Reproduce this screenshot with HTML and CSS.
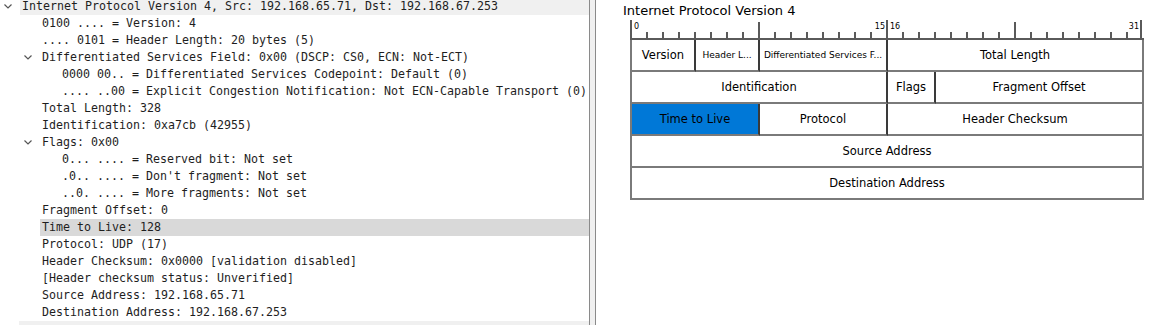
FILE: index.html
```html
<!DOCTYPE html>
<html>
<head>
<meta charset="utf-8">
<link rel="stylesheet" href="styles.css">
</head>
<body>
<div class="app">
  <div class="tree-pane">
    <div class="tree">
      <div class="row lvl0 hover"><svg class="chev" viewBox="0 0 8 5"><polyline points="0.5,0.5 4,4 7.5,0.5"/></svg><span class="txt">Internet Protocol Version 4, Src: 192.168.65.71, Dst: 192.168.67.253</span></div>
      <div class="row lvl1"><span class="txt">0100 .... = Version: 4</span></div>
      <div class="row lvl1"><span class="txt">.... 0101 = Header Length: 20 bytes (5)</span></div>
      <div class="row lvl1"><svg class="chev" viewBox="0 0 8 5"><polyline points="0.5,0.5 4,4 7.5,0.5"/></svg><span class="txt">Differentiated Services Field: 0x00 (DSCP: CS0, ECN: Not-ECT)</span></div>
      <div class="row lvl2"><span class="txt">0000 00.. = Differentiated Services Codepoint: Default (0)</span></div>
      <div class="row lvl2"><span class="txt">.... ..00 = Explicit Congestion Notification: Not ECN-Capable Transport (0)</span></div>
      <div class="row lvl1"><span class="txt">Total Length: 328</span></div>
      <div class="row lvl1"><span class="txt">Identification: 0xa7cb (42955)</span></div>
      <div class="row lvl1"><svg class="chev" viewBox="0 0 8 5"><polyline points="0.5,0.5 4,4 7.5,0.5"/></svg><span class="txt">Flags: 0x00</span></div>
      <div class="row lvl2"><span class="txt">0... .... = Reserved bit: Not set</span></div>
      <div class="row lvl2"><span class="txt">.0.. .... = Don't fragment: Not set</span></div>
      <div class="row lvl2"><span class="txt">..0. .... = More fragments: Not set</span></div>
      <div class="row lvl1"><span class="txt">Fragment Offset: 0</span></div>
      <div class="row lvl1 selected"><span class="txt">Time to Live: 128</span></div>
      <div class="row lvl1"><span class="txt">Protocol: UDP (17)</span></div>
      <div class="row lvl1"><span class="txt">Header Checksum: 0x0000 [validation disabled]</span></div>
      <div class="row lvl1"><span class="txt">[Header checksum status: Unverified]</span></div>
      <div class="row lvl1"><span class="txt">Source Address: 192.168.65.71</span></div>
      <div class="row lvl1"><span class="txt">Destination Address: 192.168.67.253</span></div>
    </div>
    <div class="hscroll"></div>
  </div>
  <div class="splitter"></div>
  <div class="diagram-pane">
    <div class="title">Internet Protocol Version 4</div>
    <div class="diagram">
      <div class="ruler">
        <div class="half"><span class="lbl">0</span><span class="lbl">15</span></div>
        <div class="half last"><span class="lbl">16</span><span class="lbl">31</span></div>
      </div>
      <div class="fields">
        <div class="cell b4">Version</div>
        <div class="cell b4 small">Header L...</div>
        <div class="cell b8 small">Differentiated Services F...</div>
        <div class="cell b16 end">Total Length</div>
        <div class="cell b16">Identification</div>
        <div class="cell b3">Flags</div>
        <div class="cell b13 end">Fragment Offset</div>
        <div class="cell b8 active">Time to Live</div>
        <div class="cell b8">Protocol</div>
        <div class="cell b16 end">Header Checksum</div>
        <div class="cell b32 end">Source Address</div>
        <div class="cell b32 end">Destination Address</div>
      </div>
    </div>
  </div>
</div>
</body>
</html>
```

FILE: styles.css
```css
html, body {
  margin: 0;
  padding: 0;
  background: #ffffff;
}

.app {
  display: flex;
  width: 1157px;
  height: 325px;
  overflow: hidden;
}

.tree-pane {
  width: 589px;
  flex: none;
  display: flex;
  flex-direction: column;
  overflow: hidden;
  background: #ffffff;
}

.tree {
  margin-top: -2px;
  flex: 1;
  font-family: "DejaVu Sans Mono", "Liberation Mono", monospace;
  font-size: 11.63px;
  color: #1e1e1e;
}

.row {
  height: 17px;
  display: flex;
  align-items: center;
  position: relative;
  white-space: nowrap;
}

.row .txt {
  display: block;
  height: 17px;
  line-height: 17px;
  padding-left: 2px;
  flex: 1;
}

.lvl0 { padding-left: 20px; }
.lvl1 { padding-left: 40px; }
.lvl2 { padding-left: 60px; }

.row.hover .txt { background: #f0f0f0; }
.row.selected .txt { background: #d9d9d9; }

.chev {
  width: 8px;
  height: 5px;
  margin-left: -16px;
  margin-right: 8px;
  fill: none;
  stroke: #555555;
  stroke-width: 1.2;
}

.hscroll {
  height: 4px;
  margin-left: 19px;
  background: #f0f0f0;
  flex: none;
}

.splitter {
  width: 5px;
  flex: none;
  background: #f0f0f0;
  border-left: 1px solid #8a8a8a;
  border-right: 1px solid #8a8a8a;
}

.diagram-pane {
  flex: 1;
  padding-left: 27px;
  font-family: "DejaVu Sans", "Liberation Sans", sans-serif;
  color: #000000;
}

.title {
  font-size: 13px;
  line-height: 15px;
  margin-top: 3px;
  height: 17px;
  white-space: nowrap;
}

.diagram {
  margin-left: 7px;
  width: 514px;
}

.ruler {
  display: flex;
  height: 18px;
  border-bottom: 2px solid #5a5a5a;
}

.half {
  width: 254px;
  border-left: 2px solid #5a5a5a;
  display: flex;
  justify-content: space-between;
  align-items: flex-start;
  background:
    linear-gradient(#5a5a5a, #5a5a5a) 126px 2px / 2px 16px no-repeat,
    repeating-linear-gradient(to right, transparent 0 14px, #5a5a5a 14px 16px) 0 100% / 100% 6px no-repeat;
}

.half.last {
  border-right: 2px solid #5a5a5a;
  width: 252px;
}

.lbl {
  font-size: 8px;
  line-height: 9px;
  padding: 2px 1px 0 2px;
  background: #ffffff;
}

.fields {
  display: grid;
  grid-template-columns: repeat(32, 16px);
  grid-auto-rows: 32px;
  border-left: 2px solid #7a7a7a;
}

.cell {
  border-right: 2px solid #3a3a3a;
  border-bottom: 2px solid #7a7a7a;
  display: flex;
  align-items: center;
  justify-content: center;
  font-size: 11.5px;
  white-space: nowrap;
  overflow: hidden;
}

.cell.end { border-right-color: #7a7a7a; }
.cell.small { font-size: 9px; }
.cell.active { background: #0078d7; }

.b3 { grid-column: span 3; }
.b4 { grid-column: span 4; }
.b8 { grid-column: span 8; }
.b13 { grid-column: span 13; }
.b16 { grid-column: span 16; }
.b32 { grid-column: span 32; }
```
